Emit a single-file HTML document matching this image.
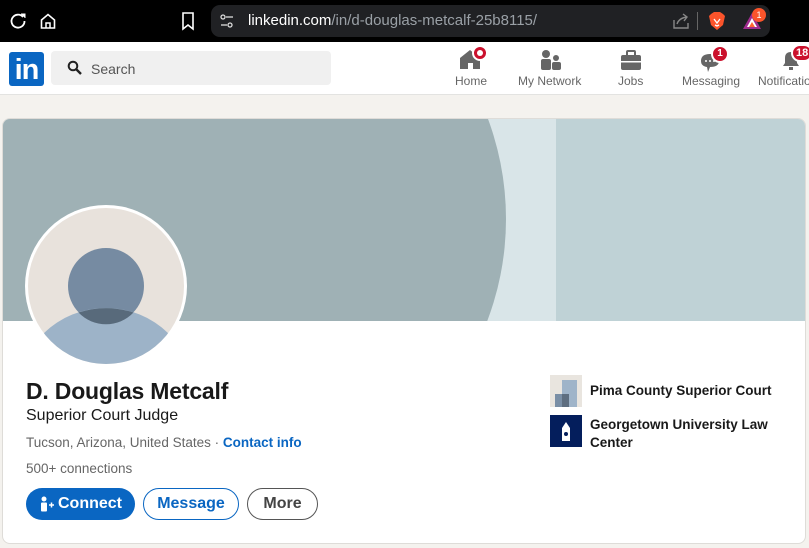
<!DOCTYPE html>
<html><head><meta charset="utf-8">
<style>
*{margin:0;padding:0;box-sizing:border-box}
body{width:809px;height:548px;overflow:hidden;background:#f4f2ee;font-family:"Liberation Sans",sans-serif;position:relative}
.abs{position:absolute}
#top{left:0;top:0;width:809px;height:42px;background:#000}
#url{left:211px;top:5px;width:559px;height:32px;border-radius:9px;background:#202124}
#nav{left:0;top:42px;width:809px;height:53px;background:#fff;border-bottom:1px solid #e3e3e1}
.navl{font-size:12px;color:#666;top:74px;white-space:nowrap}
#card{left:2px;top:118px;width:804px;height:426px;background:#fff;border-radius:8px;overflow:hidden;border:1px solid #dedcd8}
.t{white-space:nowrap}
.btn{position:absolute;top:488px;height:32px;border-radius:16px;font-size:16px;font-weight:bold;display:flex;align-items:center;justify-content:center}
</style></head><body>
<div id="top" class="abs"></div>
<svg class="abs" style="left:8px;top:11px" width="20" height="20" viewBox="0 0 20 20"><path d="M15 6 A6.5 6.5 0 1 0 16.5 10" fill="none" stroke="#fff" stroke-width="1.8"/><path d="M13 3 L17 3 L17 7" fill="#fff" stroke="#fff" stroke-width="1"/></svg>
<svg class="abs" style="left:38px;top:11px" width="20" height="20" viewBox="0 0 20 20"><path d="M3.5 9 L10 3.5 L16.5 9 V17 H3.5 Z" fill="none" stroke="#fff" stroke-width="1.6"/><path d="M8 17 V12 H12 V17" fill="none" stroke="#fff" stroke-width="1.5"/></svg>
<svg class="abs" style="left:180px;top:11px" width="16" height="20" viewBox="0 0 16 20"><path d="M3 2 H13 V18 L8 14 L3 18 Z" fill="none" stroke="#fff" stroke-width="1.6"/></svg>
<div id="url" class="abs"></div>
<svg class="abs" style="left:219px;top:13px" width="16" height="16" viewBox="0 0 16 16"><circle cx="4" cy="4" r="2" fill="none" stroke="#ddd" stroke-width="1.3"/><line x1="7" y1="4" x2="14" y2="4" stroke="#ddd" stroke-width="1.3"/><circle cx="11" cy="12" r="2" fill="none" stroke="#ddd" stroke-width="1.3"/><line x1="2" y1="12" x2="8" y2="12" stroke="#ddd" stroke-width="1.3"/></svg>
<div class="abs t" style="left:248px;top:12px;font-size:15px;color:#fff">linkedin.com<span style="color:#9aa0a6">/in/d-douglas-metcalf-25b8115/</span></div>
<svg class="abs" style="left:672px;top:12px" width="18" height="18" viewBox="0 0 18 18"><path d="M2 8 V16 H16 V11" fill="none" stroke="#888" stroke-width="1.4"/><path d="M5 12 Q7 6 15 5 M11 2 L15 5 L12 9" fill="none" stroke="#888" stroke-width="1.4"/></svg>
<div class="abs" style="left:697px;top:12px;width:1px;height:18px;background:#666"></div>
<svg class="abs" style="left:708px;top:11px" width="18" height="20" viewBox="0 0 18 20"><path d="M3 3 L6 1 H12 L15 3 L17 5 L15 14 L9 19 L3 14 L1 5 Z" fill="#fb542b"/><path d="M6 8 L9 12 L12 8 M7 14 L9 15 L11 14" fill="none" stroke="#fff" stroke-width="1.3"/></svg>
<svg class="abs" style="left:742px;top:12px" width="20" height="18" viewBox="0 0 20 18"><path d="M10 1 L19 17 H1 Z" fill="#a02c8e"/><path d="M10 6 L15 15 H5 Z" fill="#fff"/><path d="M10 10 L13 15 H7Z" fill="#f63"/></svg>
<div class="abs" style="left:752px;top:8px;width:14px;height:14px;border-radius:7px;background:#fb542b;color:#fff;font-size:9px;text-align:center;line-height:14px">1</div>

<div id="nav" class="abs"></div>
<div class="abs" style="left:9px;top:52px;width:35px;height:34px;background:#0a66c2;border-radius:3px;color:#fff;font-weight:bold;font-size:29px;line-height:36px;text-align:center;letter-spacing:-1px">in</div>
<div class="abs" style="left:51px;top:51px;width:280px;height:34px;background:#f0f0f0;border-radius:4px"></div>
<svg class="abs" style="left:67px;top:60px" width="16" height="16" viewBox="0 0 16 16"><circle cx="6" cy="6" r="4.3" fill="none" stroke="#222" stroke-width="2"/><line x1="9" y1="9" x2="14" y2="14" stroke="#222" stroke-width="2.4"/></svg>
<div class="abs t" style="left:91px;top:61px;font-size:14px;color:#555">Search</div>

<svg class="abs" style="left:458px;top:48px" width="26" height="22" viewBox="0 0 26 22"><path d="M12 2 L22 10 V21 H15 V15 H10 V21 H2 V10 Z" fill="#666"/></svg>
<div class="abs" style="left:472px;top:45px;width:16px;height:16px;border-radius:8px;background:#cb112d;border:2px solid #fff"><div style="margin:3px;width:6px;height:6px;border-radius:3px;background:#fff"></div></div>
<div class="abs navl" style="left:455px">Home</div>

<svg class="abs" style="left:540px;top:49px" width="22" height="22" viewBox="0 0 22 22"><circle cx="6" cy="5" r="4" fill="#666"/><rect x="1" y="10" width="10" height="11" rx="2" fill="#666"/><circle cx="16" cy="9" r="3" fill="#666"/><rect x="12" y="13" width="9" height="8" rx="2" fill="#666"/></svg>
<div class="abs navl" style="left:518px">My Network</div>

<svg class="abs" style="left:620px;top:49px" width="22" height="22" viewBox="0 0 22 22"><rect x="7" y="2" width="8" height="5" rx="1" fill="none" stroke="#666" stroke-width="2"/><rect x="1" y="6" width="20" height="15" rx="2" fill="#666"/><rect x="1" y="12" width="20" height="1.5" fill="#fff"/></svg>
<div class="abs navl" style="left:618px">Jobs</div>

<svg class="abs" style="left:699px;top:50px" width="24" height="24" viewBox="0 0 24 24"><path d="M2 11 Q2 4 11 4 Q20 4 20 11 Q20 17 11 17 L9 22 L8 17 Q2 16 2 11Z" fill="#666"/><circle cx="7" cy="11" r="1" fill="#fff"/><circle cx="11" cy="11" r="1" fill="#fff"/><circle cx="15" cy="11" r="1" fill="#fff"/></svg>
<div class="abs" style="left:711px;top:45px;width:18px;height:18px;border-radius:9px;background:#cb112d;border:2px solid #fff;color:#fff;font-size:10px;font-weight:bold;text-align:center;line-height:14px">1</div>
<div class="abs navl" style="left:682px">Messaging</div>

<svg class="abs" style="left:779px;top:48px" width="24" height="24" viewBox="0 0 24 24"><path d="M4 18 L6 15 V10 Q6 4 12 4 Q18 4 18 10 V15 L20 18 Z" fill="#666"/><rect x="10" y="19" width="4" height="3" fill="#666"/></svg>
<div class="abs" style="left:791px;top:44px;width:22px;height:18px;border-radius:9px;background:#cb112d;border:2px solid #fff;color:#fff;font-size:11px;font-weight:bold;line-height:14px;padding-left:3px">18</div>
<div class="abs navl" style="left:758px">Notifications</div>

<div id="card" class="abs">
<svg width="804" height="202" style="display:block">
<rect width="804" height="202" fill="#bfd2d6"/>
<rect width="553" height="202" fill="#d9e5e8"/>
<circle cx="216" cy="100" r="287" fill="#9fb1b5"/>
</svg>
</div>
<svg class="abs" style="left:25px;top:204px" width="164" height="164" viewBox="0 0 164 164">
<defs><clipPath id="avc"><circle cx="81" cy="82" r="78"/></clipPath></defs>
<circle cx="81" cy="82" r="81" fill="#fff"/>
<g clip-path="url(#avc)">
<rect width="164" height="164" fill="#e8e2dc"/>
<circle cx="81" cy="82" r="38" fill="#768ba2"/>
<ellipse cx="81" cy="190" rx="88" ry="86" fill="#9db3c8"/>
</g>
<path d="M53.5 108.5 A88 86 0 0 1 108.5 108.5 A38 38 0 0 1 53.5 108.5 Z" fill="#586a7b"/>
</svg>

<div class="abs t" style="left:26px;top:378px;font-size:23px;font-weight:bold;color:#191919;letter-spacing:-0.2px">D. Douglas Metcalf</div>
<div class="abs t" style="left:26px;top:407px;font-size:16px;color:#191919">Superior Court Judge</div>
<div class="abs t" style="left:26px;top:435px;font-size:13.5px;color:#666">Tucson, Arizona, United States · <b style="color:#0a66c2">Contact info</b></div>
<div class="abs t" style="left:26px;top:461px;font-size:13.5px;color:#666">500+ connections</div>

<div class="btn" style="left:26px;width:109px;background:#0a66c2;color:#fff"><svg width="16" height="16" viewBox="0 0 16 16" style="margin-right:3px"><circle cx="5" cy="3" r="2.5" fill="#fff"/><rect x="2" y="6.5" width="6" height="9" rx="1" fill="#fff"/><path d="M10 9 H15 M12.5 6.5 V11.5" stroke="#fff" stroke-width="1.5"/></svg>Connect</div>
<div class="btn" style="left:143px;width:96px;border:1px solid #0a66c2;color:#0a66c2">Message</div>
<div class="btn" style="left:247px;width:71px;border:1px solid #555;color:#444">More</div>

<svg class="abs" style="left:550px;top:375px" width="32" height="32" viewBox="0 0 32 32"><rect width="32" height="32" fill="#e9e5df"/><rect x="12" y="5" width="15" height="27" fill="#9fb4c9"/><rect x="5" y="19" width="14" height="13" fill="#7a8fa6"/><rect x="12" y="19" width="7" height="13" fill="#5e6e80"/></svg>
<div class="abs t" style="left:590px;top:383px;font-size:13.5px;font-weight:bold;color:#191919">Pima County Superior Court</div>
<svg class="abs" style="left:550px;top:415px" width="32" height="32" viewBox="0 0 32 32"><rect width="32" height="32" fill="#041e5c"/><path d="M16 7 L20 13 H12 Z" fill="#fff"/><rect x="12" y="13" width="8" height="13" fill="#fff"/><circle cx="16" cy="19" r="2" fill="#041e5c"/></svg>
<div class="abs" style="left:590px;top:416px;font-size:13.5px;font-weight:bold;color:#191919;line-height:18px;width:200px">Georgetown University Law<br>Center</div>
</body></html>
